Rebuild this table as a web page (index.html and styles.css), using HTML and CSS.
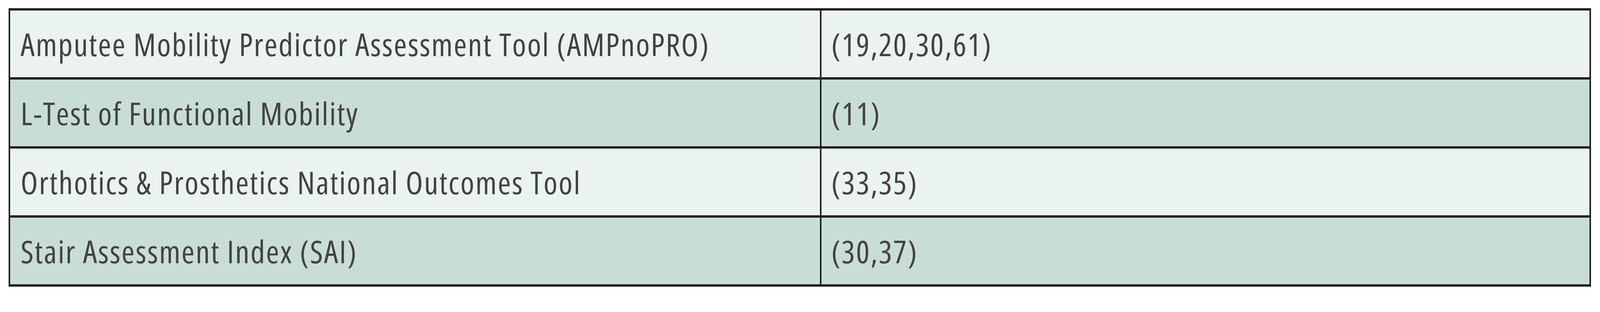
FILE: index.html
```html
<!DOCTYPE html>
<html lang="en">
<head>
<meta charset="utf-8">
<title>Outcome measures</title>
<link rel="stylesheet" href="styles.css">
</head>
<body>
<table class="refs">
  <colgroup>
    <col class="col-name">
    <col class="col-cite">
  </colgroup>
  <tbody>
    <tr class="light"><td class="name">Amputee Mobility Predictor Assessment Tool (AMPnoPRO)</td><td class="cite">(19,20,30,61)</td></tr>
    <tr class="dark"><td class="name">L-Test of Functional Mobility</td><td class="cite">(11)</td></tr>
    <tr class="light"><td class="name">Orthotics &amp; Prosthetics National Outcomes Tool</td><td class="cite">(33,35)</td></tr>
    <tr class="dark"><td class="name">Stair Assessment Index (SAI)</td><td class="cite">(30,37)</td></tr>
  </tbody>
</table>
</body>
</html>
```
FILE: styles.css
```css
html, body {
  margin: 0;
  padding: 0;
  background: #ffffff;
}
body {
  padding: 21px 0.566vw 0 0.546vw;
  font-family: "Open Sans", Lato, sans-serif;
  color: #424242;
}
.refs {
  border-collapse: collapse;
  border-style: solid;
  border-color: #231f20;
  border-width: 6px 0.12vw;
  width: 100%;
  table-layout: fixed;
}
.col-name {
  width: 51.33%;
}
.refs td {
  border-style: solid;
  border-color: #231f20;
  border-width: 6px 0.12vw;
  height: 177px;
  padding: 0 0 0 0.647vw;
  box-sizing: border-box;
  vertical-align: middle;
  font-size: 81px;
  font-weight: 400;
  font-stretch: 75%;
  letter-spacing: 2.75px;
  line-height: 1;
  white-space: nowrap;
  overflow: hidden;
}
.refs td.cite {
  padding-left: 0.606vw;
}
.light td {
  background: #eaf3f1;
}
.dark td {
  background: #c9ddd8;
}
```
